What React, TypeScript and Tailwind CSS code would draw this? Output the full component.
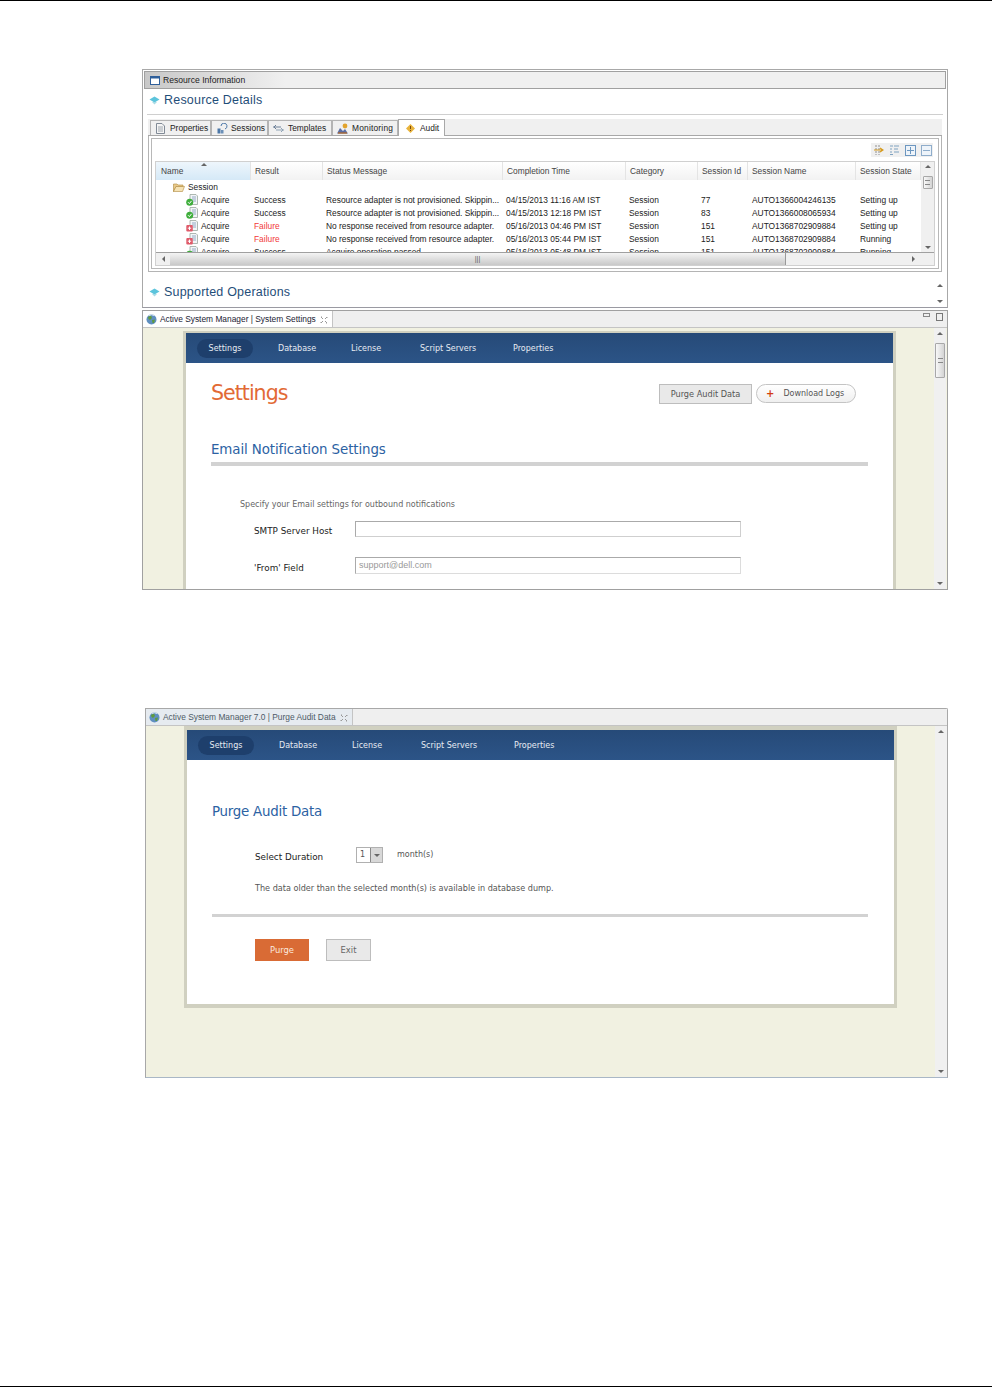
const tableFont = "font-['Liberation_Sans',sans-serif]";
const webFont = "font-['DejaVu_Sans',sans-serif]";

const rows = [
  { ok: true, result: "Success", msg: "Resource adapter is not provisioned. Skippin...", date: "04/15/2013 11:16 AM IST", id: "77", name: "AUTO1366004246135", state: "Setting up" },
  { ok: true, result: "Success", msg: "Resource adapter is not provisioned. Skippin...", date: "04/15/2013 12:18 PM IST", id: "83", name: "AUTO1366008065934", state: "Setting up" },
  { ok: false, result: "Failure", msg: "No response received from resource adapter.", date: "05/16/2013 04:46 PM IST", id: "151", name: "AUTO1368702909884", state: "Setting up" },
  { ok: false, result: "Failure", msg: "No response received from resource adapter.", date: "05/16/2013 05:44 PM IST", id: "151", name: "AUTO1368702909884", state: "Running" },
  { ok: true, result: "Success", msg: "Acquire operation passed", date: "05/16/2013 05:48 PM IST", id: "151", name: "AUTO1368702909884", state: "Running" },
];

const columns = ["Name", "Result", "Status Message", "Completion Time", "Category", "Session Id", "Session Name", "Session State"];
const colGrid = "grid grid-cols-[95px_72px_180px_123px_72px_50px_108px_65px]";

function Bullet() {
  return (
    <svg width="11" height="9" viewBox="0 0 11 9" className="shrink-0">
      <path d="M5.5 0.5 L10.5 3.5 L5.5 6.5 L0.5 3.5 Z" fill="#5cc4dc" />
      <path d="M3 6 L5.5 8.5 L8 6 Z" fill="#a9dbe6" />
    </svg>
  );
}

function Globe() {
  return (
    <svg width="11" height="11" viewBox="0 0 11 11" className="shrink-0">
      <circle cx="5.5" cy="5.5" r="5" fill="#5f8fc0" />
      <path d="M2 3 L5 1.5 L6 4 L4 6 L2.5 5 Z M6 6 L9 5.5 L8 9 L6.5 9 Z" fill="#5f9a3e" />
      <path d="M3 1.5 A5 5 0 0 1 8 1.5" stroke="#d8e6f2" fill="none" />
    </svg>
  );
}

function CloseX() {
  return (
    <svg width="8" height="8" viewBox="0 0 8 8" className="shrink-0" fill="none" stroke="#999" strokeWidth="1">
      <path d="M1 1 L3 3 M7 1 L5 3 M1 7 L3 5 M7 7 L5 5 M1 1 H2 M7 1 V2 M1 7 V6 M7 7 H6" />
    </svg>
  );
}

function RowIcon({ ok }: { ok: boolean }) {
  return (
    <svg width="12" height="12" viewBox="0 0 12 12" className="shrink-0">
      <path d="M4 0.5 H10 L11.5 2 V10.5 H4 Z" fill="#f2f5f7" stroke="#9aa7a0" strokeWidth="0.8" />
      <path d="M6 3 H10 M6 5 H10 M7 7 H10" stroke="#7d97b8" strokeWidth="0.8" />
      {ok ? (
        <>
          <circle cx="3.7" cy="8.2" r="3.5" fill="#3fae3c" />
          <path d="M2 8.2 L3.4 9.6 L5.5 6.9" stroke="#fff" strokeWidth="1" fill="none" />
        </>
      ) : (
        <>
          <rect x="0.3" y="5" width="6.5" height="6.5" rx="1" fill="#df5b6a" />
          <path d="M3.5 6.5 V10 M1.8 8.2 H5.2" stroke="#fff" strokeWidth="1" />
        </>
      )}
    </svg>
  );
}

function Folder() {
  return (
    <svg width="12" height="9" viewBox="0 0 12 9" className="shrink-0">
      <path d="M0.5 8.5 V1 H4 L5 2 H10 V3.5 H3 L0.5 8.5 Z" fill="#e8c98a" stroke="#b08a3e" strokeWidth="0.6" />
      <path d="M0.5 8.5 L3 3.5 H11.5 L9.5 8.5 Z" fill="#f5e2b4" stroke="#b08a3e" strokeWidth="0.6" />
    </svg>
  );
}

function TabIcon({ kind }: { kind: string }) {
  if (kind === "Properties")
    return (
      <svg width="9" height="11" viewBox="0 0 9 11" className="shrink-0">
        <path d="M0.5 0.5 H6 L8.5 3 V10.5 H0.5 Z" fill="#f4f4f4" stroke="#808a96" />
        <path d="M2 4 H7 M2 6 H7 M2 8 H7" stroke="#8a94a0" strokeWidth="0.8" />
      </svg>
    );
  if (kind === "Sessions")
    return (
      <svg width="11" height="11" viewBox="0 0 11 11" className="shrink-0">
        <rect x="0.5" y="5.5" width="3" height="5" fill="#4d78a8" />
        <rect x="4" y="7" width="2.5" height="3.5" fill="#6b90b8" />
        <path d="M4 3 A3 3 0 1 1 8 6" stroke="#4d78a8" fill="none" />
      </svg>
    );
  if (kind === "Templates")
    return (
      <svg width="11" height="9" viewBox="0 0 11 9" className="shrink-0" fill="none" stroke="#6c8098">
        <path d="M0 3 H8 M3 1 L1 3 L3 5" />
        <path d="M11 6 H3 M8 4 L10 6 L8 8" stroke="#8fa3b5" />
      </svg>
    );
  if (kind === "Monitoring")
    return (
      <svg width="12" height="11" viewBox="0 0 12 11" className="shrink-0">
        <path d="M0 10.5 L3 5 L6 8 L8 6 L11 10.5 Z" fill="#5a6ea5" />
        <circle cx="8" cy="3" r="2.4" fill="#e2a32c" />
        <path d="M1 10 H10" stroke="#b5651d" strokeWidth="1.2" />
      </svg>
    );
  return (
    <svg width="9" height="9" viewBox="0 0 9 9" className="shrink-0">
      <path d="M4.5 0 L9 4.5 L4.5 9 L0 4.5 Z" fill="#e9b43c" />
      <path d="M4.5 2 V5 M4.5 6 V7" stroke="#7a4a10" strokeWidth="1" />
    </svg>
  );
}

function ArrowBtn({ dir }: { dir: "up" | "down" | "left" | "right" }) {
  const d = { up: "M0 4 L3 1 L6 4 Z", down: "M0 2 L3 5 L6 2 Z", left: "M4 0 L1 3 L4 6 Z", right: "M2 0 L5 3 L2 6 Z" }[dir];
  return (
    <svg width="6" height="6" viewBox="0 0 6 6" className="shrink-0">
      <path d={d} fill="#666" />
    </svg>
  );
}

function Thumb({ className }: { className: string }) {
  return (
    <div className={`bg-gradient-to-r from-[#f8f8f8] to-[#d4d4d4] border border-[#a8a8a8] rounded-[1px] flex items-center justify-center ${className}`}>
      <div className="w-[5px] h-[5px] border-y border-[#888]" />
    </div>
  );
}

function ToolIcons() {
  return (
    <div className="h-[14px] flex justify-end items-center pr-[2px] mb-[4px]">
      <div className="bg-[#f0f0f0] flex items-center gap-[5px] pl-[2px] pr-[1px] h-[14px]">
        <svg width="11" height="12" viewBox="0 0 11 12" fill="none">
          <path d="M3 1 V11 M6 1 V11" stroke="#777" strokeWidth="0.8" strokeDasharray="2 1" />
          <path d="M1 6 H9 M7 4 L10 6 L7 8" stroke="#d69a1c" strokeWidth="1.2" />
        </svg>
        <svg width="11" height="10" viewBox="0 0 11 10" fill="none" stroke="#7fa2c0">
          <path d="M1 1 H4 M1 4 H3 M1 7 H3 M5 1 H10 M5 4 H9 M5 7 H10 M1 9.5 H4" strokeWidth="1" />
        </svg>
        <svg width="11" height="11" viewBox="0 0 11 11" fill="#eef4fa" stroke="#6d97c0">
          <rect x="0.5" y="0.5" width="10" height="10" />
          <path d="M5.5 2 V9 M2 5.5 H9" fill="none" />
        </svg>
        <svg width="11" height="11" viewBox="0 0 11 11" fill="#eef4fa" stroke="#8fadcb">
          <rect x="0.5" y="0.5" width="10" height="10" />
          <path d="M2 5.5 H9" fill="none" />
        </svg>
      </div>
    </div>
  );
}

function AuditTable() {
  return (
    <div className={`h-[105px] border border-[#d0d0d0] flex flex-col ${tableFont} text-[8.4px] text-[#222]`}>
      <div className="flex h-[90px]">
        <div className="w-[765px] overflow-hidden">
          <div className={`${colGrid} h-[18px] bg-gradient-to-b from-white to-[#f2f2f2]`}>
            {columns.map((c, i) => (
              <div
                key={c}
                className={`flex items-center border-r border-[#e4e4e4] relative ${i === 0 ? "pl-[5px] bg-gradient-to-b from-[#eef6fc] to-[#d5e9f7]" : "pl-[4px]"}`}
              >
                {i === 0 && (
                  <span className="absolute left-[45px] top-[0px]">
                    <ArrowBtn dir="up" />
                  </span>
                )}
                <span className="text-[#444]">{c}</span>
              </div>
            ))}
          </div>
          <div className="h-[72px] overflow-hidden">
            <div className="flex items-center h-[13px] mt-[1px] pl-[17px] gap-[3px]">
              <Folder />
              <span>Session</span>
            </div>
            {rows.map((r, i) => (
              <div key={i} className={`${colGrid} h-[13px] items-center`}>
                <div className="flex items-center gap-[3px] pl-[30px]">
                  <RowIcon ok={r.ok} />
                  <span>Acquire</span>
                </div>
                <div className={`pl-[3px] ${r.ok ? "" : "text-[#f23a3a]"}`}>{r.result}</div>
                <div className="pl-[3px] whitespace-nowrap">{r.msg}</div>
                <div className="pl-[3px] whitespace-nowrap">{r.date}</div>
                <div className="pl-[3px]">Session</div>
                <div className="pl-[3px]">{r.id}</div>
                <div className="pl-[4px]">{r.name}</div>
                <div className="pl-[4px] whitespace-nowrap">{r.state}</div>
              </div>
            ))}
          </div>
        </div>
        <div className="w-[13px] bg-[#f0f0f0] flex flex-col items-center pt-[2px] pb-[2px]">
          <ArrowBtn dir="up" />
          <Thumb className="w-[10px] h-[13px] mt-[6px]" />
          <div className="flex-1" />
          <ArrowBtn dir="down" />
        </div>
      </div>
      <div className="h-[13px] flex items-center bg-[#f0f0f0] border-t border-[#a0a0a0] pl-[5px]">
        <ArrowBtn dir="left" />
        <div className="ml-[3px] w-[616px] h-[12px] bg-gradient-to-b from-[#f4f4f4] to-[#c9c9c9] border-r border-[#999] flex items-center justify-center text-[#555] text-[7px]">
          |||
        </div>
        <div className="flex-1" />
        <span className="mr-[18px]">
          <ArrowBtn dir="right" />
        </span>
      </div>
    </div>
  );
}

function ResourcePanel() {
  const tabs = [
    { name: "Properties", cls: "w-[61px] pl-[5px] gap-[5px]" },
    { name: "Sessions", cls: "w-[57px] pl-[5px] gap-[3px]" },
    { name: "Templates", cls: "w-[64px] pl-[4px] gap-[4px]" },
    { name: "Monitoring", cls: "w-[66px] pl-[4px] gap-[3px] tracking-[0.2px]" },
  ];
  return (
    <div className="h-[239px] border border-[#a8a8a8] border-b-[#9a9aa2] px-[1px] flex flex-col bg-white">
      <div className={`h-[18px] mt-[1px] border border-[#a0a0a0] bg-[#f0f0f0] flex items-center ${tableFont}`}>
        <div className="flex items-center gap-[3px] pl-[5px] pr-[40px] h-full bg-gradient-to-r from-[#c8c8c8] via-[#dcdcdc] to-[#f0f0f0]">
          <svg width="10" height="9" viewBox="0 0 10 9">
            <rect x="0.5" y="0.5" width="9" height="8" fill="#fff" stroke="#2f5f9a" />
            <rect x="0.5" y="0.5" width="9" height="2" fill="#2f5f9a" />
          </svg>
          <span className="text-[8.6px] text-[#222]">Resource Information</span>
        </div>
      </div>
      <div className="flex items-center gap-[4px] pl-[5px] mt-[4px] h-[14px]">
        <Bullet />
        <span className={`text-[12.5px] text-[#1f4e79] ${tableFont} tracking-[0.2px]`}>Resource Details</span>
      </div>
      <div className="h-px bg-[#cfcfcf] mx-[3px] mt-[7px]" />
      <div className="ml-[4px] mr-[4px] mt-[4px] h-[17px] bg-[#f0f0f0] flex items-end pl-[2px] border-b border-[#a8a8a8]">
        {tabs.map((t) => (
          <div
            key={t.name}
            className={`h-[15px] pt-[1px] flex items-center bg-[#f0f0f0] border border-b-0 border-[#b4b4b4] text-[8.4px] text-[#222] whitespace-nowrap ${t.cls} ${tableFont}`}
          >
            <TabIcon kind={t.name} />
            <span>{t.name}</span>
          </div>
        ))}
        <div className={`h-[17px] w-[47px] -mb-px flex items-center gap-[5px] pl-[7px] bg-white border border-b-0 border-[#a8a8a8] text-[8.4px] text-[#222] ${tableFont}`}>
          <TabIcon kind="Audit" />
          <span>Audit</span>
        </div>
      </div>
      <div className="ml-[4px] mr-[4px] h-[136px] border border-t-0 border-[#b4b4b4] p-[2px]">
        <div className="h-[131px] border border-[#b8b8b8] pt-[4px] px-[3px]">
          <ToolIcons />
          <AuditTable />
        </div>
      </div>
      <div className="flex-1 flex">
        <div className="flex-1 flex items-center gap-[4px] pl-[5px] pt-[6px]">
          <Bullet />
          <span className={`text-[12.5px] text-[#1f4e79] ${tableFont} tracking-[0.2px]`}>Supported Operations</span>
        </div>
        <div className="w-[12px] flex flex-col items-center justify-center gap-[9px] mt-[8px]">
          <ArrowBtn dir="up" />
          <ArrowBtn dir="down" />
        </div>
      </div>
    </div>
  );
}

function NavBar() {
  const items = [
    { name: "Database", cls: "w-[73px]" },
    { name: "License", cls: "w-[69px]" },
    { name: "Script Servers", cls: "w-[93px]" },
    { name: "Properties", cls: "w-[60px]" },
  ];
  return (
    <div className={`h-[30px] bg-gradient-to-b from-[#264a78] to-[#2c5487] flex items-center pl-[11px] text-[8px] text-[#e6ebf2] ${webFont}`}>
      <div className="w-[56px] h-[19px] pt-[1px] rounded-full bg-[#1e3f6c] flex items-center justify-center mr-[25px]">Settings</div>
      {items.map((t) => (
        <div key={t.name} className={`whitespace-nowrap pt-[1px] ${t.cls}`}>
          {t.name}
        </div>
      ))}
    </div>
  );
}

function BrowserTab({ title, width, text, tint }: { title: string; width: string; text: string; tint: string }) {
  return (
    <div className="h-[17px] bg-[#efefef] border-b border-[#c4c4c4] flex">
      <div className={`h-full border-r border-[#c4c4c4] flex items-center gap-[3px] pl-[3px] ${tint} ${width} ${tableFont} ${text}`}>
        <Globe />
        <span className="whitespace-nowrap">{title}</span>
        <span className="ml-[1px]">
          <CloseX />
        </span>
      </div>
    </div>
  );
}

function VScroll({ thumb }: { thumb: boolean }) {
  return (
    <div className="w-[12px] bg-[#f0f0f0] flex flex-col items-center py-[3px]">
      <ArrowBtn dir="up" />
      {thumb && <Thumb className="w-[10px] h-[35px] mt-[6px]" />}
      <div className="flex-1" />
      <ArrowBtn dir="down" />
    </div>
  );
}

function SettingsPanel() {
  return (
    <div className="h-[280px] mt-[2px] border border-[#a0a0a0] flex flex-col overflow-hidden relative">
      <BrowserTab title="Active System Manager | System Settings" width="w-[190px]" text="text-[8.4px] text-[#223] pt-[1px]" tint="bg-white" />
      <div className="absolute right-[4px] top-[2px] flex gap-[6px] items-start">
        <div className="w-[7px] h-[4px] border border-[#888]" />
        <div className="w-[7px] h-[8px] border border-[#777]" />
      </div>
      <div className="flex-1 flex bg-[#f1f1e1] overflow-hidden">
        <div className="w-[40px]" />
        <div className="w-[713px] pt-[3px]">
          <div className="w-[713px] bg-white border-x-[3px] border-t-[2px] border-[#d0d0c0] h-[300px]">
            <NavBar />
            <div className={webFont}>
              <div className="flex items-start justify-between pl-[25px] pr-[37px] pt-[16px]">
                <h1 className="text-[20.6px] leading-[28px] text-[#e26a35] tracking-[-1px]">Settings</h1>
                <div className="flex gap-[4px] mt-[5px]">
                  <button className="w-[93px] h-[20px] pt-[1px] bg-[#e9e9e9] border border-[#bdbdbd] text-[8.2px] text-[#555]">Purge Audit Data</button>
                  <button className="w-[100px] h-[19px] pt-[1px] rounded-full border border-[#c4c4c4] bg-gradient-to-b from-white to-[#efefef] flex items-center pl-[9px] gap-[9px] text-[8px] text-[#555]">
                    <span className="text-[#d23c10] font-bold text-[10px] leading-none">+</span>
                    <span>Download Logs</span>
                  </button>
                </div>
              </div>
              <div className="mx-[25px] mt-[34px]">
                <h2 className="text-[13.4px] leading-[18px] text-[#2c62a3] tracking-[-0.1px]">Email Notification Settings</h2>
                <div className="h-[4px] bg-[#d2d2d2] mt-[3px]" />
              </div>
              <p className="pl-[54px] mt-[33px] text-[8px] text-[#666] leading-[12px]">Specify your Email settings for outbound notifications</p>
              <div className="flex items-center mt-[8px] pl-[68px]">
                <label className="w-[101px] text-[8.8px] text-[#222] mt-[6px]">SMTP Server Host</label>
                <div className="w-[386px] h-[16px] border border-[#cfcfcf] border-t-[#aaa] border-l-[#aaa]" />
              </div>
              <div className="flex items-center mt-[18px] pl-[68px]">
                <label className="w-[101px] text-[8.8px] text-[#222] mt-[6px]">'From' Field</label>
                <div className={`w-[386px] h-[17px] border border-[#dcdcdc] border-t-[#aaa] border-l-[#aaa] pl-[3px] text-[9px] text-[#999] flex items-center ${tableFont}`}>support@dell.com</div>
              </div>
            </div>
          </div>
        </div>
        <div className="w-[38px]" />
        <VScroll thumb />
      </div>
    </div>
  );
}

function PurgePanel() {
  return (
    <div className="h-[370px] mt-[118px] ml-[3px] border border-[#a8a8a8] border-b-[#a9b7c6] rounded-tr-[2px] flex flex-col overflow-hidden">
      <BrowserTab title="Active System Manager 7.0 | Purge Audit Data" width="w-[207px]" text="text-[8.4px] text-[#4d5a66] pt-[1px]" tint="bg-[#e6ebf0]" />
      <div className="flex-1 flex bg-[#f1f1e1]">
        <div className="w-[38px]" />
        <div className="w-[713px] h-[282px] bg-white border-x-[3px] border-y-[4px] border-[#d0d0c0]">
          <NavBar />
          <div className={webFont}>
            <h2 className="pl-[25px] mt-[43px] text-[13.4px] leading-[18px] text-[#2c62a3] tracking-[-0.25px]">Purge Audit Data</h2>
            <div className="flex items-center pl-[68px] mt-[26px] h-[16px]">
              <span className="w-[101px] text-[8.8px] text-[#222] mt-[6px]">Select Duration</span>
              <div className="w-[27px] h-[16px] border border-[#b0b0b0] flex items-center pl-[3px] text-[8px] text-[#555]">
                <span className="flex-1">1</span>
                <span className="w-[12px] h-full bg-[#d8d8d8] border-l border-[#888] flex items-center justify-center">
                  <ArrowBtn dir="down" />
                </span>
              </div>
              <span className="ml-[14px] text-[8px] text-[#555]">month(s)</span>
            </div>
            <p className="pl-[68px] mt-[19px] text-[8.1px] leading-[12px] text-[#555]">The data older than the selected month(s) is available in database dump.</p>
            <div className="h-[3px] bg-[#d2d2d2] ml-[25px] mr-[26px] mt-[20px]" />
            <div className="flex pl-[68px] gap-[17px] mt-[22px]">
              <button className="w-[54px] h-[22px] bg-[#d96b35] text-[8.4px] text-[#fbe9df]">Purge</button>
              <button className="w-[45px] h-[22px] bg-[#e9e9e9] border border-[#bdbdbd] text-[8.4px] text-[#666]">Exit</button>
            </div>
          </div>
        </div>
        <div className="w-[38px]" />
        <VScroll thumb={false} />
      </div>
    </div>
  );
}

export default function App() {
  return (
    <div className="w-[992px] h-[1388px] bg-white flex flex-col">
      <div className="h-px bg-black" />
      <div className="ml-[142px] w-[806px] mt-[68px]">
        <ResourcePanel />
        <SettingsPanel />
        <PurgePanel />
      </div>
      <div className="flex-1" />
      <div className="h-px bg-black mb-[1px]" />
    </div>
  );
}
